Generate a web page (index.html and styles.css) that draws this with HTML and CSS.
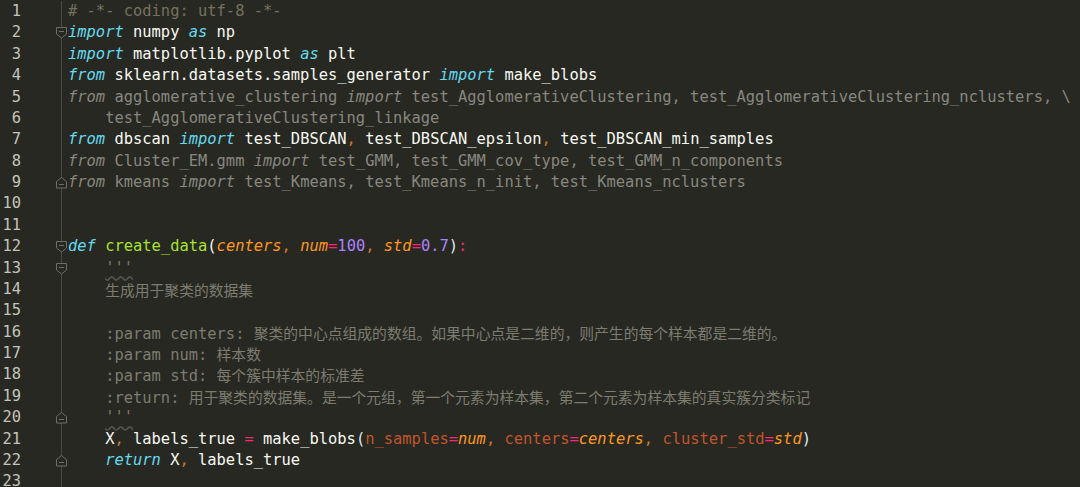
FILE: index.html
```html
<!DOCTYPE html>
<html lang="zh">
<head>
<meta charset="utf-8">
<title>create_data.py</title>
<link rel="stylesheet" href="styles.css">
</head>
<body>
<div class="editor">
  <div class="ln"><span class="no">1</span><span class="gut"></span><span class="code"><span class="cm"># -*- coding: utf-8 -*-</span></span></div>
  <div class="ln"><span class="no">2</span><span class="gut"><svg class="fold" viewBox="0 0 11 12" width="11" height="12"><polygon points="0.5,0.5 10.5,0.5 10.5,7 5.5,11 0.5,7"/><line x1="3" y1="4.5" x2="8" y2="4.5"/></svg></span><span class="code"><span class="kw">import</span> numpy <span class="kw">as</span> np</span></div>
  <div class="ln"><span class="no">3</span><span class="gut"></span><span class="code"><span class="kw">import</span> matplotlib.pyplot <span class="kw">as</span> plt</span></div>
  <div class="ln"><span class="no">4</span><span class="gut"></span><span class="code"><span class="kw">from</span> sklearn.datasets.samples_generator <span class="kw">import</span> make_blobs</span></div>
  <div class="ln"><span class="no">5</span><span class="gut"></span><span class="code dim"><i>from</i> agglomerative_clustering <i>import</i> test_AgglomerativeClustering, test_AgglomerativeClustering_nclusters, \</span></div>
  <div class="ln"><span class="no">6</span><span class="gut"></span><span class="code dim">    test_AgglomerativeClustering_linkage</span></div>
  <div class="ln"><span class="no">7</span><span class="gut"></span><span class="code"><span class="kw">from</span> dbscan <span class="kw">import</span> test_DBSCAN<span class="cma">,</span> test_DBSCAN_epsilon<span class="cma">,</span> test_DBSCAN_min_samples</span></div>
  <div class="ln"><span class="no">8</span><span class="gut"></span><span class="code dim"><i>from</i> Cluster_EM.gmm <i>import</i> test_GMM, test_GMM_cov_type, test_GMM_n_components</span></div>
  <div class="ln"><span class="no">9</span><span class="gut"><svg class="fold end" viewBox="0 0 11 12" width="11" height="12"><polygon points="5.5,0.5 10.5,4.5 10.5,11 0.5,11 0.5,4.5"/><line x1="3" y1="7.5" x2="8" y2="7.5"/></svg></span><span class="code dim"><i>from</i> kmeans <i>import</i> test_Kmeans, test_Kmeans_n_init, test_Kmeans_nclusters</span></div>
  <div class="ln"><span class="no">10</span><span class="gut"></span><span class="code"></span></div>
  <div class="ln"><span class="no">11</span><span class="gut"></span><span class="code"></span></div>
  <div class="ln"><span class="no">12</span><span class="gut"><svg class="fold" viewBox="0 0 11 12" width="11" height="12"><polygon points="0.5,0.5 10.5,0.5 10.5,7 5.5,11 0.5,7"/><line x1="3" y1="4.5" x2="8" y2="4.5"/></svg></span><span class="code"><span class="kw">def</span> <span class="fn">create_data</span>(<span class="pa">centers</span><span class="cma">,</span> <span class="pa">num</span><span class="op">=</span><span class="nu">100</span><span class="cma">,</span> <span class="pa">std</span><span class="op">=</span><span class="nu">0.7</span><span class="pr">)</span><span class="op">:</span></span></div>
  <div class="ln"><span class="no">13</span><span class="gut"><svg class="fold" viewBox="0 0 11 12" width="11" height="12"><polygon points="0.5,0.5 10.5,0.5 10.5,7 5.5,11 0.5,7"/><line x1="3" y1="4.5" x2="8" y2="4.5"/></svg></span><span class="code doc">    <span class="sq">'''</span></span></div>
  <div class="ln"><span class="no">14</span><span class="gut"></span><span class="code doc">    <span class="cjk">生成用于聚类的数据集</span></span></div>
  <div class="ln"><span class="no">15</span><span class="gut"></span><span class="code doc"></span></div>
  <div class="ln"><span class="no">16</span><span class="gut"></span><span class="code doc">    :param centers: <span class="cjk">聚类的中心点组成的数组。如果中心点是二维的，则产生的每个样本都是二维的。</span></span></div>
  <div class="ln"><span class="no">17</span><span class="gut"></span><span class="code doc">    :param num: <span class="cjk">样本数</span></span></div>
  <div class="ln"><span class="no">18</span><span class="gut"></span><span class="code doc">    :param std: <span class="cjk">每个簇中样本的标准差</span></span></div>
  <div class="ln"><span class="no">19</span><span class="gut"></span><span class="code doc">    :return: <span class="cjk">用于聚类的数据集。是一个元组，第一个元素为样本集，第二个元素为样本集的真实簇分类标记</span></span></div>
  <div class="ln"><span class="no">20</span><span class="gut"><svg class="fold end" viewBox="0 0 11 12" width="11" height="12"><polygon points="5.5,0.5 10.5,4.5 10.5,11 0.5,11 0.5,4.5"/><line x1="3" y1="7.5" x2="8" y2="7.5"/></svg></span><span class="code doc">    <span class="sq">'''</span></span></div>
  <div class="ln"><span class="no">21</span><span class="gut"></span><span class="code">    X<span class="cma">,</span> labels_true <span class="op">=</span> make_blobs<span class="pr">(</span><span class="kwa">n_samples</span><span class="op">=</span><span class="pa">num</span><span class="cma">,</span> <span class="kwa">centers</span><span class="op">=</span><span class="pa">centers</span><span class="cma">,</span> <span class="kwa">cluster_std</span><span class="op">=</span><span class="pa">std</span><span class="pr">)</span></span></div>
  <div class="ln"><span class="no">22</span><span class="gut"><svg class="fold end" viewBox="0 0 11 12" width="11" height="12"><polygon points="5.5,0.5 10.5,4.5 10.5,11 0.5,11 0.5,4.5"/><line x1="3" y1="7.5" x2="8" y2="7.5"/></svg></span><span class="code">    <span class="kw">return</span> X<span class="cma">,</span> labels_true</span></div>
  <div class="ln"><span class="no">23</span><span class="gut"></span><span class="code"></span></div>
</div>
</body>
</html>
```
FILE: styles.css
```css
html, body {
  margin: 0;
  padding: 0;
  background: #272822;
  overflow: hidden;
}
.editor {
  padding-top: 1px;
  font-family: "DejaVu Sans Mono", "Noto Sans CJK SC", monospace;
  font-size: 15.43px;
  color: #f8f8f2;
}
.ln {
  display: flex;
  height: 21.38px;
  line-height: 21.38px;
}
.no {
  width: 21px;
  flex: none;
  text-align: right;
  color: #c4c4bb;
}
.gut {
  width: 40px;
  flex: none;
  border-right: 1px solid #4a4a43;
  position: relative;
}
.fold {
  position: absolute;
  right: -6px;
  top: 5px;
}
.fold polygon {
  fill: #272822;
  stroke: #6e6e66;
  stroke-width: 1;
}
.fold line {
  stroke: #6e6e66;
  stroke-width: 1;
}
.code {
  padding-left: 6px;
  white-space: pre;
}
.kw { color: #66d9ef; font-style: italic; }
.cm { color: #75715e; }
.dim { color: #87877f; }
.dim i { font-style: italic; }
.cma { color: #cc7832; }
.fn { color: #a6e22e; }
.pa { color: #fd971f; font-style: italic; }
.op { color: #f92672; }
.nu { color: #ae81ff; }
.pr { color: #dcebef; }
.kwa { color: #c1552b; }
.doc { color: #7d7c70; }
.cjk {
  font-family: "Noto Sans CJK SC", sans-serif;
  font-size: 14.8px;
}
.sq {
  text-decoration: underline wavy #56564d;
  text-underline-offset: 3px;
}
```
